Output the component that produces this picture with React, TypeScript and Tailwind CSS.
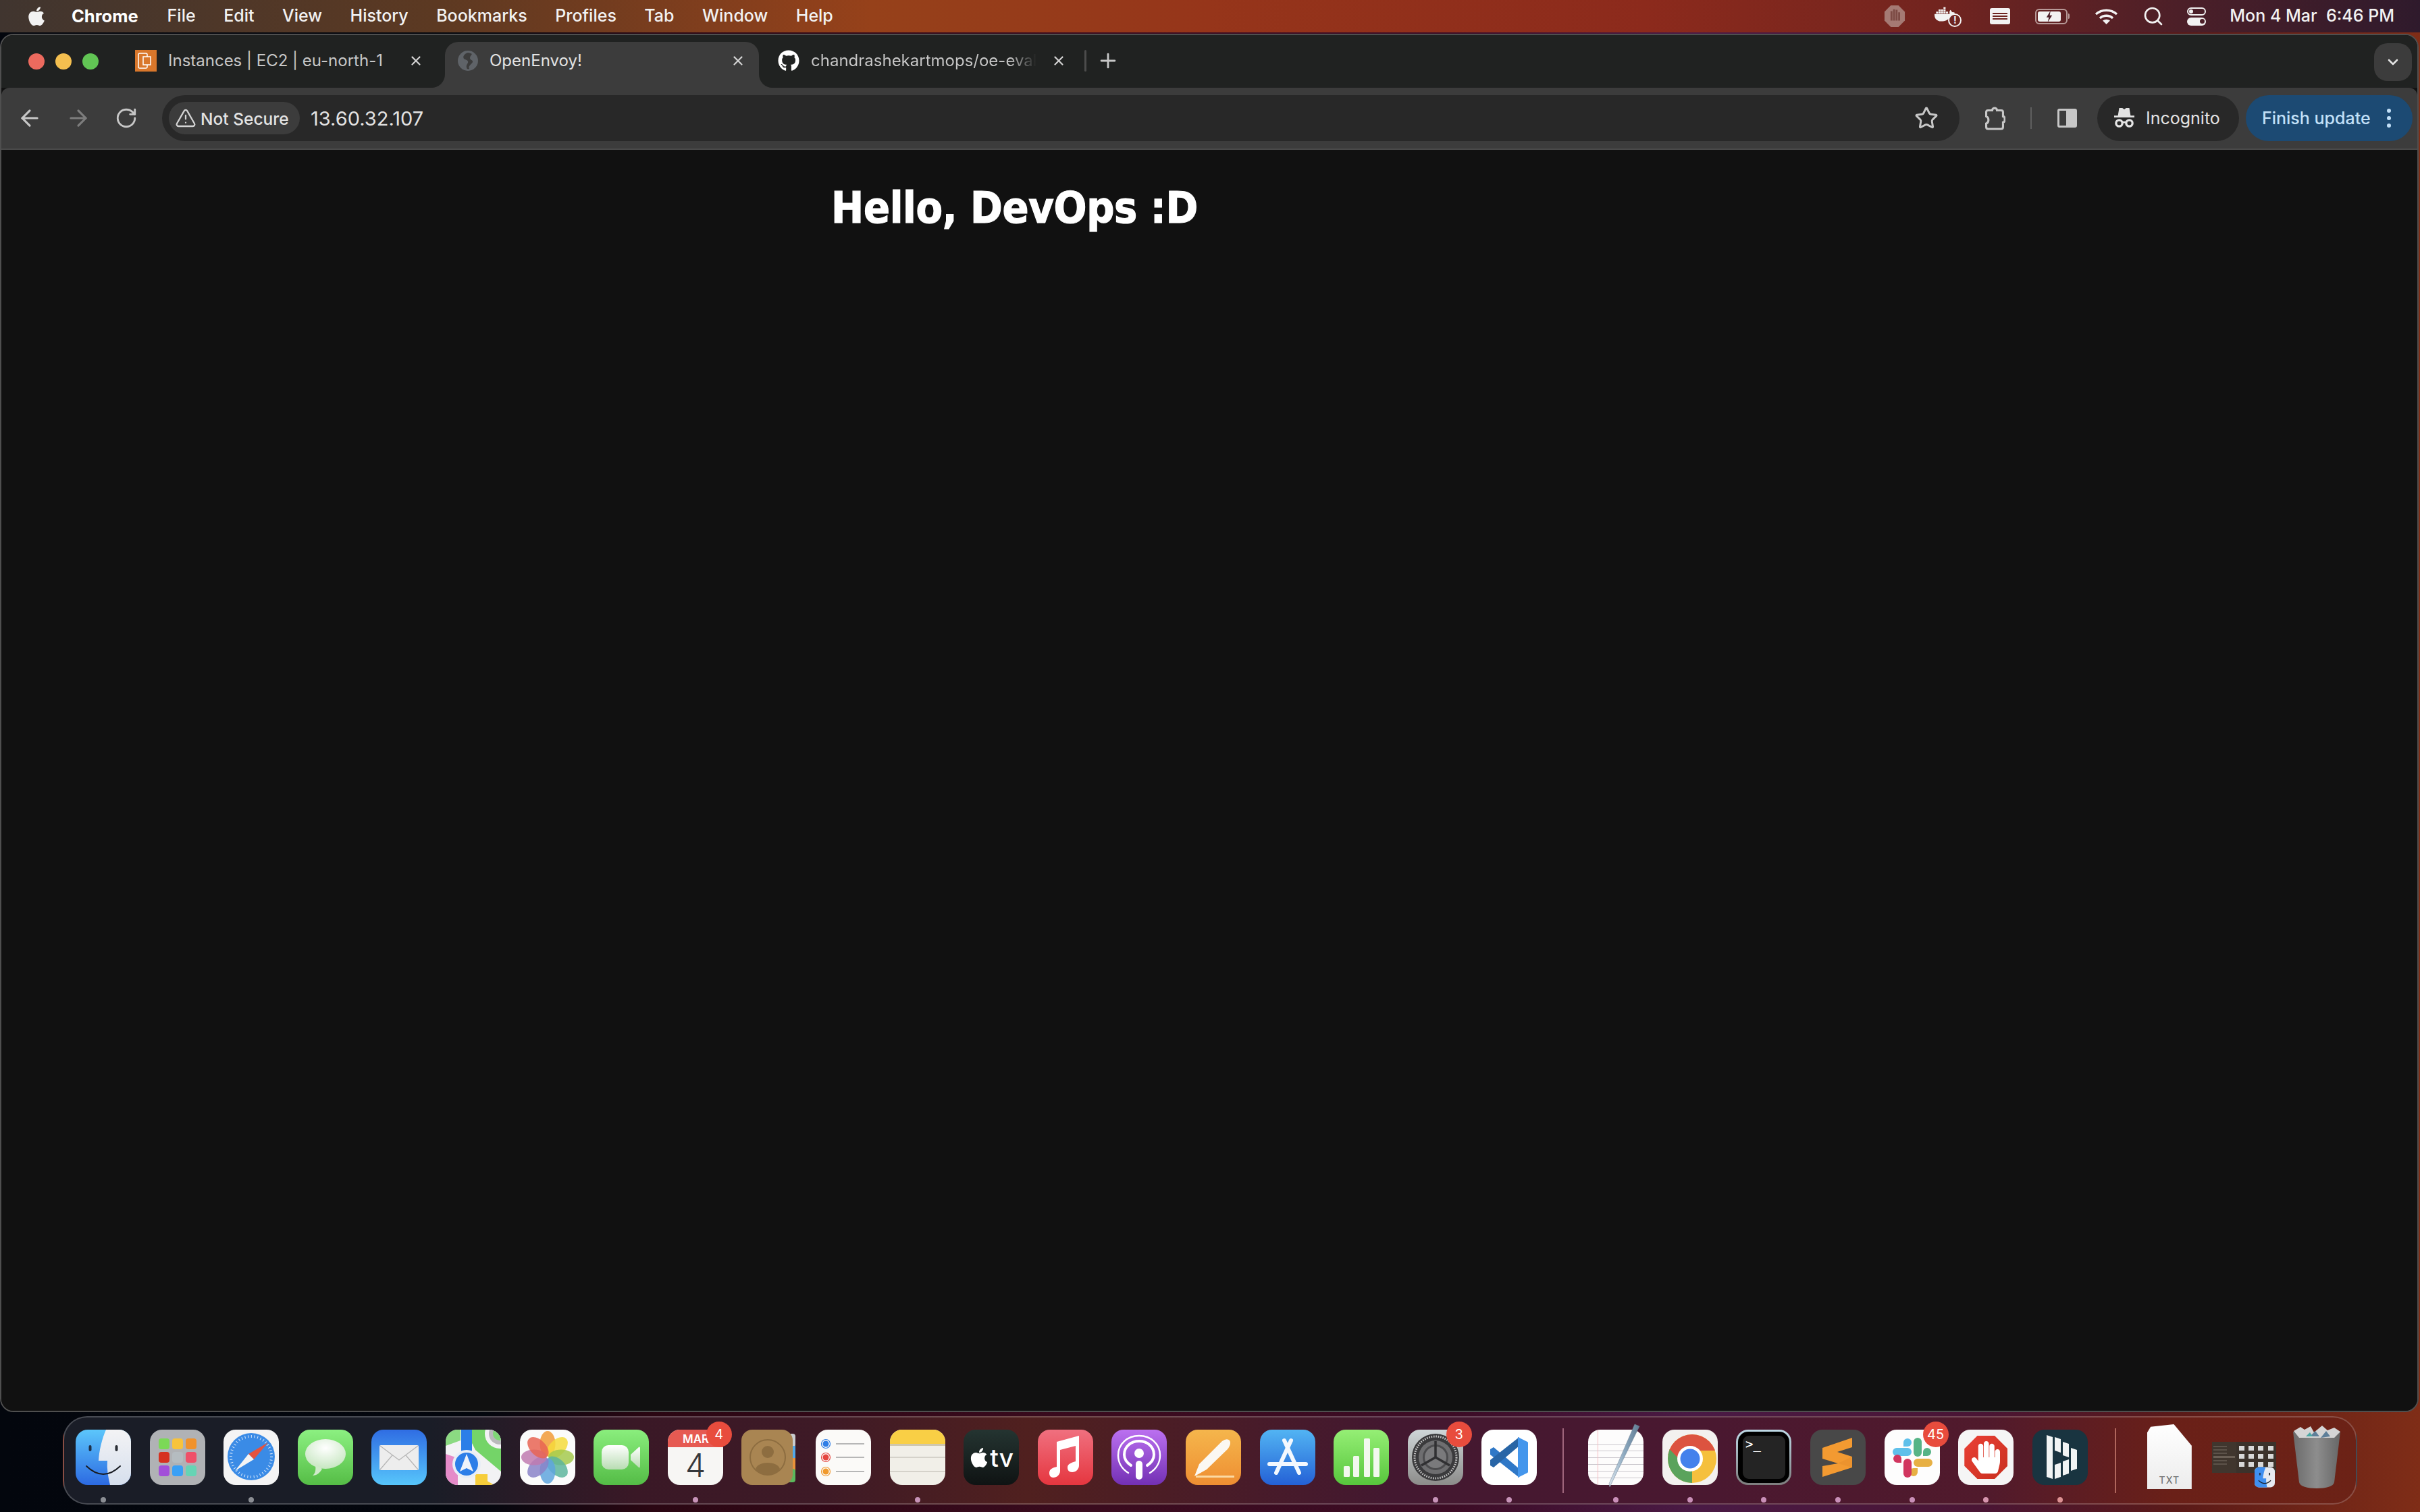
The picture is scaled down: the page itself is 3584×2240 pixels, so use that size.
import type { ReactNode } from "react";
import { ArrowLeft, ArrowRight, ChevronDown, Plus, RotateCw, Search, Star, TriangleAlert, X } from "lucide-react";
import { FaApple, FaDocker, FaGithub, FaHandPaper } from "react-icons/fa";

const menus = ["File", "Edit", "View", "History", "Bookmarks", "Profiles", "Tab", "Window", "Help"];

function Svg({ children }: { children: ReactNode }) {
  return (
    <svg viewBox="0 0 82 82" className="h-[82px] w-[82px] overflow-visible">
      {children}
    </svg>
  );
}

function Finder() {
  return (
    <Svg>
      <defs>
        <linearGradient id="fb" x1="0" y1="0" x2="0" y2="1">
          <stop offset="0" stopColor="#5cc6fb" />
          <stop offset="1" stopColor="#2c6ae2" />
        </linearGradient>
        <linearGradient id="fw" x1="0" y1="0" x2="0" y2="1">
          <stop offset="0" stopColor="#f3f3f5" />
          <stop offset="1" stopColor="#d6dfed" />
        </linearGradient>
        <clipPath id="fc">
          <rect width="82" height="82" rx="18" />
        </clipPath>
      </defs>
      <g clipPath="url(#fc)">
        <rect width="82" height="82" fill="url(#fb)" />
        <path d="M45 0C39 14 35 30 34 46H47C46 58 48 70 51 82H82V0Z" fill="url(#fw)" />
      </g>
      <rect x="19.5" y="23" width="4" height="9" rx="2" fill="#1f3047" />
      <rect x="58.5" y="23" width="4" height="9" rx="2" fill="#2b2f36" />
      <path d="M16 54Q41 78 66 54" fill="none" stroke="#1a1d24" strokeWidth="2" strokeLinecap="round" />
    </Svg>
  );
}

function Launchpad() {
  const cols = ["#7bd957", "#f8c33c", "#f0922c", "#d6311f", "#b5bcc0", "#ef5068", "#a24fd9", "#3aa0f5", "#66d4b4"];
  return (
    <Svg>
      <rect width="82" height="82" rx="18" fill="#b0b2b5" />
      {cols.map((c, i) => (
        <rect key={c} x={13 + (i % 3) * 20} y={13 + Math.floor(i / 3) * 20} width="16" height="16" rx="4" fill={c} />
      ))}
    </Svg>
  );
}

function Safari() {
  return (
    <Svg>
      <rect width="82" height="82" rx="18" fill="#f4f4f4" />
      <circle cx="41" cy="40" r="35" fill="#3a8be6" />
      <circle cx="41" cy="40" r="30" fill="none" stroke="#d8e8fa" strokeWidth="4" strokeDasharray="1 3.7" />
      <polygon points="66,19 45,44 37,36" fill="#e5533f" />
      <polygon points="17,61 45,44 37,36" fill="#f4f4f4" />
    </Svg>
  );
}

function Messages() {
  return (
    <Svg>
      <defs>
        <linearGradient id="mg" x1="0" y1="0" x2="0" y2="1">
          <stop offset="0" stopColor="#8cf081" />
          <stop offset="1" stopColor="#55bd46" />
        </linearGradient>
        <radialGradient id="mb" cx="0.5" cy="0.3" r="0.8">
          <stop offset="0" stopColor="#ffffff" />
          <stop offset="1" stopColor="#bfe3b8" />
        </radialGradient>
      </defs>
      <rect width="82" height="82" rx="18" fill="url(#mg)" />
      <ellipse cx="41" cy="36" rx="30" ry="22" fill="url(#mb)" />
      <path d="M26 52C27 60 26 65 22 68C28 68 33 64 36 58Z" fill="#cfeac9" />
    </Svg>
  );
}

function Mail() {
  return (
    <Svg>
      <defs>
        <linearGradient id="ml" x1="0" y1="0" x2="0" y2="1">
          <stop offset="0" stopColor="#2f6de3" />
          <stop offset="1" stopColor="#57c6fb" />
        </linearGradient>
      </defs>
      <rect width="82" height="82" rx="18" fill="url(#ml)" />
      <rect x="12" y="23" width="58" height="37" rx="2" fill="#ededed" />
      <path d="M13 24L41 45L69 24M13 59L31 38M69 59L51 38" fill="none" stroke="#b4b4b4" strokeWidth="1.2" />
    </Svg>
  );
}

function Maps() {
  return (
    <Svg>
      <defs>
        <clipPath id="mc">
          <rect width="82" height="82" rx="18" />
        </clipPath>
      </defs>
      <g clipPath="url(#mc)">
        <rect width="82" height="82" fill="#f2f2f4" />
        <path d="M0 0H22V16L0 24Z" fill="#7fd776" opacity="0.9" />
        <polygon points="44,0 82,0 82,62 44,30 39,20 39,0" fill="#74d468" />
        <circle cx="80" cy="6" r="22" fill="#f2f2f4" />
        <circle cx="80" cy="6" r="16" fill="#b9b9bb" />
        <circle cx="80" cy="6" r="10" fill="#7fd776" />
        <rect x="23" y="0" width="16" height="40" fill="#2c7ee8" />
        <polygon points="0,36 18,42 18,82 0,82" fill="#e58bc9" />
        <polygon points="44,66 72,82 44,82" fill="#f6cd3b" />
        <rect x="44" y="66" width="18" height="16" fill="#f6cd3b" />
        <circle cx="31" cy="51" r="21" fill="#e8eef6" />
        <circle cx="31" cy="51" r="17" fill="#2c7ee8" />
        <polygon points="31,36 41,62 31,57 21,62" fill="#eef3fa" />
      </g>
    </Svg>
  );
}

function Photos() {
  const cols = ["#f19a37", "#f5db3c", "#a5c94e", "#5db59c", "#5fa5dd", "#8a82c8", "#c07ab0", "#e86453"];
  return (
    <Svg>
      <rect width="82" height="82" rx="18" fill="#fbfbfb" />
      {cols.map((c, i) => (
        <ellipse key={c} cx="41" cy="21" rx="11.5" ry="19" fill={c} opacity="0.85" transform={`rotate(${i * 45} 41 41)`} />
      ))}
      <circle cx="41" cy="41" r="1.5" fill="#fff" />
    </Svg>
  );
}

function FaceTime() {
  return (
    <Svg>
      <defs>
        <linearGradient id="ft" x1="0" y1="0" x2="0" y2="1">
          <stop offset="0" stopColor="#8aee7d" />
          <stop offset="1" stopColor="#54bc46" />
        </linearGradient>
        <linearGradient id="fv" x1="0" y1="0" x2="0" y2="1">
          <stop offset="0" stopColor="#ffffff" />
          <stop offset="1" stopColor="#b8dcb2" />
        </linearGradient>
      </defs>
      <rect width="82" height="82" rx="18" fill="url(#ft)" />
      <rect x="12" y="23" width="40" height="36" rx="10" fill="url(#fv)" />
      <path d="M55 37L67 26C68 25 69 26 69 28V54C69 56 68 57 67 56L55 45Z" fill="url(#fv)" />
    </Svg>
  );
}

function Calendar() {
  return (
    <Svg>
      <defs>
        <clipPath id="cc">
          <rect width="82" height="82" rx="18" />
        </clipPath>
      </defs>
      <g clipPath="url(#cc)">
        <rect width="82" height="82" fill="#f7f6f4" />
        <rect width="82" height="26" fill="#e65a52" />
      </g>
      <text x="22" y="20" fontSize="17" fontWeight="600" fill="#fff" fontFamily="Inter, sans-serif">MAR</text>
      <text x="41" y="70" fontSize="48" fontWeight="300" textAnchor="middle" fill="#36383c" fontFamily="Inter, sans-serif">4</text>
    </Svg>
  );
}

function Contacts() {
  return (
    <Svg>
      <rect x="60" y="6" width="20" height="20" rx="4" fill="#c9cdd0" />
      <rect x="60" y="24" width="20" height="20" fill="#52a8e8" />
      <rect x="60" y="42" width="20" height="20" fill="#e8923a" />
      <rect x="60" y="58" width="20" height="20" rx="4" fill="#5cb85c" />
      <rect width="76" height="82" rx="16" fill="#a98552" />
      <circle cx="39" cy="41" r="26" fill="none" stroke="#8d6d40" strokeWidth="2" />
      <circle cx="39" cy="33" r="9" fill="#8d6d40" />
      <path d="M21 58C25 46 53 46 57 58C50 70 28 70 21 58Z" fill="#8d6d40" />
    </Svg>
  );
}

function Reminders() {
  const rows: [number, string][] = [[21, "#2f7ee6"], [41, "#e5453f"], [62, "#f09a2e"]];
  return (
    <Svg>
      <rect width="82" height="82" rx="18" fill="#fbfaf8" />
      {rows.map(([y, c]) => (
        <g key={y}>
          <circle cx="15" cy={y} r="6.5" fill="none" stroke={c} strokeWidth="1.2" />
          <circle cx="15" cy={y} r="4.5" fill={c} />
          <rect x="30" y={y - 1} width="42" height="2" fill="#b7b7b7" />
        </g>
      ))}
    </Svg>
  );
}

function Notes() {
  return (
    <Svg>
      <defs>
        <clipPath id="nc">
          <rect width="82" height="82" rx="18" />
        </clipPath>
      </defs>
      <g clipPath="url(#nc)">
        <rect width="82" height="82" fill="#f1efe8" />
        <rect width="82" height="21" fill="#f9cf45" />
        <rect y="21" width="82" height="3" fill="#cfc7ae" />
        <rect y="40" width="82" height="2" fill="#d5d2ca" />
        <rect y="61" width="82" height="2" fill="#d5d2ca" />
      </g>
    </Svg>
  );
}

function AppleTv() {
  return (
    <div className="flex h-[82px] w-[82px] items-center justify-center gap-[1px] rounded-[18px] bg-[linear-gradient(180deg,#243431,#0f1313)] text-white">
      <FaApple className="h-[33px] w-[30px]" />
      <span className="text-[37px] leading-none font-medium">tv</span>
    </div>
  );
}

function MusicIcon() {
  return (
    <Svg>
      <defs>
        <linearGradient id="mu" x1="0" y1="0" x2="0" y2="1">
          <stop offset="0" stopColor="#f0707f" />
          <stop offset="1" stopColor="#e5363f" />
        </linearGradient>
      </defs>
      <rect width="82" height="82" rx="18" fill="url(#mu)" />
      <path d="M26 23L59 14V58C59 64 54 68 49 68C44 68 42 65 42 61C42 56 47 54 54 52V29L31 35V66C31 72 26 76 21 76C16 76 15 72 15 69C15 63 21 61 26 60Z" fill="#fff" transform="translate(2 -5)" />
    </Svg>
  );
}

function Podcasts() {
  return (
    <Svg>
      <defs>
        <linearGradient id="po" x1="0" y1="0" x2="0" y2="1">
          <stop offset="0" stopColor="#bb70f0" />
          <stop offset="1" stopColor="#7330b4" />
        </linearGradient>
      </defs>
      <rect width="82" height="82" rx="18" fill="url(#po)" />
      <g fill="none" stroke="#fff" strokeWidth="2.5" strokeLinecap="round">
        <path d="M25 64C15 58 10 48 10 38C10 21 24 9 41 9C58 9 72 21 72 38C72 48 67 58 57 64" />
        <path d="M29 53C23 49 19 43 19 37C19 25 29 17 41 17C53 17 63 25 63 37C63 43 59 49 53 53" strokeWidth="4" />
      </g>
      <circle cx="41" cy="35" r="7" fill="#fff" />
      <rect x="36" y="46" width="10" height="28" rx="5" fill="#fff" />
    </Svg>
  );
}

function Pages() {
  return (
    <Svg>
      <defs>
        <linearGradient id="pg" x1="0" y1="0" x2="0" y2="1">
          <stop offset="0" stopColor="#f5b64c" />
          <stop offset="1" stopColor="#ee8e32" />
        </linearGradient>
      </defs>
      <rect width="82" height="82" rx="18" fill="url(#pg)" />
      <path d="M13 69L20 51L54 17Q61 12 65 16Q68 21 62 29L31 59Z" fill="#fbf8f2" />
      <rect x="15" y="68" width="57" height="3" fill="#fbd9a2" />
    </Svg>
  );
}

function AppStore() {
  return (
    <Svg>
      <defs>
        <linearGradient id="as" x1="0" y1="0" x2="0" y2="1">
          <stop offset="0" stopColor="#52b4f3" />
          <stop offset="1" stopColor="#2461d6" />
        </linearGradient>
      </defs>
      <rect width="82" height="82" rx="18" fill="url(#as)" />
      <g stroke="#f3f8fe" strokeLinecap="round">
        <line x1="36" y1="16" x2="58" y2="64" strokeWidth="6" />
        <line x1="46" y1="16" x2="24" y2="64" strokeWidth="6" />
        <line x1="14" y1="51" x2="68" y2="51" strokeWidth="6" />
      </g>
    </Svg>
  );
}

function Numbers() {
  const bars: [number, number][] = [[15, 16], [29, 31], [45, 57], [59, 43]];
  return (
    <Svg>
      <defs>
        <linearGradient id="nu" x1="0" y1="0" x2="0" y2="1">
          <stop offset="0" stopColor="#95ef75" />
          <stop offset="1" stopColor="#57c63c" />
        </linearGradient>
      </defs>
      <rect width="82" height="82" rx="18" fill="url(#nu)" />
      {bars.map(([x, h]) => (
        <rect key={x} x={x} y={70 - h} width="9" height={h} rx="1.5" fill="#f2f8ee" />
      ))}
    </Svg>
  );
}

function Settings() {
  return (
    <Svg>
      <defs>
        <linearGradient id="se" x1="0" y1="0" x2="0" y2="1">
          <stop offset="0" stopColor="#cfd6d8" />
          <stop offset="1" stopColor="#8c8c8a" />
        </linearGradient>
      </defs>
      <rect width="82" height="82" rx="18" fill="url(#se)" />
      <circle cx="41" cy="41" r="35" fill="#3a3a3c" />
      <circle cx="41" cy="41" r="31" fill="none" stroke="#c4c4c4" strokeWidth="3" strokeDasharray="1.6 1.8" />
      <circle cx="41" cy="41" r="25" fill="#6e6e70" />
      <circle cx="41" cy="41" r="19" fill="#4c4c4e" />
      <circle cx="41" cy="41" r="16" fill="#7a7a7c" />
      <g stroke="#303032" strokeWidth="3.5">
        <line x1="41" y1="41" x2="41" y2="17" />
        <line x1="41" y1="41" x2="62" y2="53" />
        <line x1="41" y1="41" x2="20" y2="53" />
      </g>
    </Svg>
  );
}

function VsCode() {
  return (
    <Svg>
      <rect width="82" height="82" rx="18" fill="#fff" />
      <polygon points="13,29 18,26 56,58 56,71 13,37" fill="#2f78c7" />
      <polygon points="13,53 18,56 56,24 56,11 13,45" fill="#2865a6" />
      <path d="M54 11L68 18C69 18.500 69 19 69 20V62C69 63 69 63.500 68 64L54 71Z" fill="#4496ec" />
    </Svg>
  );
}

function TextEdit() {
  return (
    <Svg>
      <defs>
        <clipPath id="tc">
          <rect width="82" height="82" rx="18" />
        </clipPath>
        <linearGradient id="pen" x1="0" y1="0" x2="1" y2="0">
          <stop offset="0" stopColor="#dce6ee" />
          <stop offset="0.5" stopColor="#8da9c0" />
          <stop offset="1" stopColor="#5f7a92" />
        </linearGradient>
      </defs>
      <g clipPath="url(#tc)">
        <rect width="82" height="82" fill="#fdfcfc" />
        {[22, 31, 41, 51, 61, 71].map((y) => (
          <rect key={y} y={y} width="82" height="1" fill="#c9c6cc" />
        ))}
        <rect x="14" width="1" height="82" fill="#f4bcc0" />
      </g>
      <polygon points="32,85 31,80 69,-8 76,-5" fill="url(#pen)" stroke="#6f8297" strokeWidth="0.5" />
    </Svg>
  );
}

function ChromeLogo() {
  return (
    <Svg>
      <defs>
        <clipPath id="cr">
          <circle cx="44" cy="43" r="36" />
        </clipPath>
      </defs>
      <rect width="82" height="82" rx="18" fill="#f3f1ef" />
      <g clipPath="url(#cr)">
        <rect width="82" height="82" fill="#f5c03d" />
        <polygon points="0,0 82,0 82,31 44,31 26,52 0,30" fill="#dc5340" />
        <polygon points="0,18 26,45 44,48 44,82 0,82" fill="#5aa35c" />
      </g>
      <circle cx="41" cy="43" r="19" fill="#fff" />
      <circle cx="41" cy="43" r="14.500" fill="#4481ec" />
    </Svg>
  );
}

function Terminal() {
  return (
    <Svg>
      <defs>
        <linearGradient id="te" x1="0" y1="0" x2="0" y2="1">
          <stop offset="0" stopColor="#bfdbe8" />
          <stop offset="1" stopColor="#7e7e7e" />
        </linearGradient>
      </defs>
      <rect width="82" height="82" rx="18" fill="url(#te)" />
      <rect x="3" y="3" width="76" height="76" rx="15" fill="#000" />
      <rect x="10" y="9" width="63" height="64" rx="9" fill="#242424" />
      <text x="14" y="28" fontSize="19" fill="#fff" fontFamily="'DejaVu Sans Mono', monospace">{">_"}</text>
    </Svg>
  );
}

function Sublime() {
  return (
    <Svg>
      <rect width="82" height="82" rx="18" fill="#484848" />
      <polygon points="62,12 18,27 18,43 41,50 18,54 18,70 62,56 62,40 40,33 62,26" fill="#f39a31" />
      <polygon points="18,43 41,50 62,40 62,56" fill="#e58c2b" opacity="0.5" />
    </Svg>
  );
}

function Slack() {
  return (
    <Svg>
      <rect width="82" height="82" rx="18" fill="#fdfdfd" />
      <g fill="#5fc0ea">
        <rect x="12" y="27" width="28" height="12" rx="6" />
        <path d="M28 25V19A6 6 0 1 1 34 25Z" transform="translate(0 0)" />
      </g>
      <g fill="#56b486">
        <rect x="43" y="12" width="12" height="28" rx="6" />
        <path d="M57 39H63A6 6 0 1 0 57 33Z" />
      </g>
      <g fill="#e7b044">
        <rect x="43" y="43" width="28" height="12" rx="6" />
        <path d="M43 57H49V63A6 6 0 1 1 43 57Z" />
      </g>
      <g fill="#d1365f">
        <rect x="28" y="43" width="12" height="28" rx="6" />
        <path d="M25 43V49H19A6 6 0 1 1 25 43Z" />
      </g>
    </Svg>
  );
}

function AdBlock() {
  return (
    <div className="flex h-[82px] w-[82px] items-center justify-center rounded-[18px] bg-[#f5f5f5]">
      <div className="flex h-[64px] w-[64px] items-center justify-center bg-[linear-gradient(135deg,#ea4036,#c9301f)] [clip-path:polygon(30%_0,70%_0,100%_30%,100%_70%,70%_100%,30%_100%,0_70%,0_30%)]">
        <FaHandPaper className="h-[48px] w-[42px] text-white" />
      </div>
    </div>
  );
}

function Dashlane() {
  const bars = [
    "21,8 30,11 30,73 21,70",
    "33,11 42,14 42,34 33,31",
    "33,52 42,49 42,70 33,73",
    "45,18 54,21 54,41 45,38",
    "45,47 54,44 54,65 45,68",
    "57,27 66,30 66,58 57,61",
  ];
  return (
    <Svg>
      <rect width="82" height="82" rx="18" fill="#193440" />
      {bars.map((b) => (
        <polygon key={b} points={b} fill="#f1f4f4" />
      ))}
    </Svg>
  );
}

function TxtFile() {
  return (
    <div className="flex h-[96px] w-[66px] items-end justify-center overflow-hidden bg-[linear-gradient(180deg,#ffffff,#ececec)] pb-[6px] [clip-path:polygon(8%_4%,60%_0,100%_33%,100%_100%,0_100%,0_13%)]">
      <span className="text-[14px] leading-none font-medium tracking-[1px] text-[#777]">TXT</span>
    </div>
  );
}

function FolderStack() {
  return (
    <div className="relative mb-[24px] grid h-[46px] w-[95px] grid-cols-[36px_1fr] bg-[#3b322b]">
      <div className="flex flex-col gap-[3px] bg-[#40362e] pt-[6px] pl-[2px]">
        {[0, 1, 2, 3, 4, 5].map((i) => (
          <div key={i} className={i === 3 ? "h-[3px] w-[32px] bg-[#6a5f55]" : "h-[2px] w-[20px] bg-[#5d534a]"} />
        ))}
      </div>
      <div className="grid grid-cols-4 content-start gap-x-[6px] gap-y-[5px] px-[4px] pt-[6px]">
        {[0, 1, 2, 3, 4, 5, 6, 7, 8, 9, 10, 11].map((i) => (
          <div key={i} className="mx-auto h-[7px] w-[8px] bg-[#d8d8d8]" />
        ))}
      </div>
      <div className="absolute top-[37px] right-[2px] h-[31px] w-[30px] [&_svg]:h-[31px] [&_svg]:w-[30px]">
        <MiniFinder />
      </div>
    </div>
  );
}

function MiniFinder() {
  return (
    <svg viewBox="0 0 82 82">
      <rect width="82" height="82" rx="18" fill="#e6eaf1" />
      <path d="M18 0H45C39 14 35 30 34 46H47C46 58 48 70 51 82H18A18 18 0 0 1 0 64V18A18 18 0 0 1 18 0Z" fill="#3f8ff0" />
      <rect x="19" y="23" width="5" height="10" fill="#1f3047" />
      <rect x="58" y="23" width="5" height="10" fill="#2b2f36" />
      <path d="M16 54Q41 78 66 54" fill="none" stroke="#1a1d24" strokeWidth="3" />
    </svg>
  );
}

function Trash() {
  return (
    <svg viewBox="0 0 72 96" className="h-[96px] w-[72px]">
      <defs>
        <linearGradient id="tr" x1="0" y1="0" x2="1" y2="0">
          <stop offset="0" stopColor="#6b6b6b" />
          <stop offset="0.5" stopColor="#8d8d8d" />
          <stop offset="1" stopColor="#666" />
        </linearGradient>
      </defs>
      <path d="M1 11H71L62 86C61 92 50 95 36 95C22 95 11 92 10 86Z" fill="url(#tr)" />
      <path d="M2 10L12 4L18 8L27 3L32 12L44 2L52 9L62 5L71 11L62 20H10Z" fill="#d5d5d5" />
      <path d="M26 18L34 10L40 18ZM42 20L50 10L56 18Z" fill="#5e7f99" />
      <path d="M20 18L26 12L30 18Z" fill="#4aa7a3" />
    </svg>
  );
}

type DockItem = { icon: ReactNode; dot?: string; badge?: string };

const leftDock: DockItem[] = [
  { icon: <Finder />, dot: "bg-[#8b8e94]" },
  { icon: <Launchpad /> },
  { icon: <Safari />, dot: "bg-[#8b8e94]" },
  { icon: <Messages /> },
  { icon: <Mail /> },
  { icon: <Maps /> },
  { icon: <Photos /> },
  { icon: <FaceTime /> },
  { icon: <Calendar />, dot: "bg-[#c793b8]", badge: "4" },
  { icon: <Contacts /> },
  { icon: <Reminders /> },
  { icon: <Notes />, dot: "bg-[#c793b8]" },
  { icon: <AppleTv /> },
  { icon: <MusicIcon /> },
  { icon: <Podcasts /> },
  { icon: <Pages /> },
  { icon: <AppStore /> },
  { icon: <Numbers /> },
  { icon: <Settings />, dot: "bg-[#c793b8]", badge: "3" },
  { icon: <VsCode />, dot: "bg-[#c793b8]" },
];

const midDock: DockItem[] = [
  { icon: <TextEdit />, dot: "bg-[#c98fb8]" },
  { icon: <ChromeLogo />, dot: "bg-[#c98fb8]" },
  { icon: <Terminal />, dot: "bg-[#c98fb8]" },
  { icon: <Sublime />, dot: "bg-[#c98fb8]" },
  { icon: <Slack />, dot: "bg-[#c98fb8]", badge: "45" },
  { icon: <AdBlock />, dot: "bg-[#d594ad]" },
  { icon: <Dashlane />, dot: "bg-[#dd9193]" },
];

function DockApp({ item }: { item: DockItem }) {
  return (
    <div className="relative flex w-[82px] flex-col items-center">
      {item.icon}
      {item.badge && (
        <span className="absolute top-[-12px] right-[-13px] flex h-[38px] w-[38px] items-center justify-center rounded-full bg-[#e84c3d] text-[20px] leading-none text-white">
          {item.badge}
        </span>
      )}
      {item.dot && <span className={`mt-[18px] h-[8px] w-[8px] rounded-full ${item.dot}`} />}
    </div>
  );
}

function Dock() {
  return (
    <div className="mt-[6px] ml-[93px] flex h-[131px] w-[3398px] items-start rounded-[36px] border-2 border-[#ffffff33] bg-[linear-gradient(90deg,#1a1d27_0%,#1a1d27_16%,#3a1826_25%,#3e1a26_33%,#50201f_42%,#431830_58%,#4a1830_72%,#511a2c_84%,#6a2018_92%,#6c2216_100%)] pt-[18px] pl-[17px]">
      <div className="flex gap-[27.6px]">
        {leftDock.map((item, i) => (
          <DockApp key={i} item={item} />
        ))}
      </div>
      <div className="mt-[-2px] mr-[36px] ml-[38px] h-[96px] w-[2px] bg-[#a0667c]" />
      <div className="flex gap-[27.6px]">
        {midDock.map((item, i) => (
          <DockApp key={i} item={item} />
        ))}
      </div>
      <div className="mt-[-2px] mr-[46px] ml-[40px] h-[96px] w-[2px] bg-[#b0665c]" />
      <div className="mt-[-8px] flex h-[96px] items-end">
        <TxtFile />
        <div className="ml-[30px]">
          <FolderStack />
        </div>
        <div className="ml-[24px]">
          <Trash />
        </div>
      </div>
    </div>
  );
}

function TabClose() {
  return <X className="h-[22px] w-[22px] shrink-0 text-[#d4d4d4]" strokeWidth={2.4} />;
}

function Tabs() {
  return (
    <div className="flex h-[78px] items-end bg-[#202221]">
      <div className="flex h-[78px] w-[198px] shrink-0 items-center gap-[16px] pl-[40px]">
        <span className="h-[24px] w-[24px] rounded-full bg-[#ec6a5e]" />
        <span className="h-[24px] w-[24px] rounded-full bg-[#f4bf4f]" />
        <span className="h-[24px] w-[24px] rounded-full bg-[#61c554]" />
      </div>
      <div className="flex h-[68px] w-[459px] shrink-0 items-center pb-[12px]">
        <svg viewBox="0 0 32 32" className="h-[32px] w-[32px] shrink-0">
          <rect width="32" height="32" fill="#d9772b" />
          <rect x="5" y="5" width="13" height="22" rx="2" fill="none" stroke="#fff" strokeWidth="1.5" />
          <rect x="12" y="10" width="11" height="12" fill="#d9772b" stroke="#fff" strokeWidth="1.5" />
        </svg>
        <span className="ml-[17px] w-[340px] text-[24px] whitespace-nowrap text-[#c7c7c7]">Instances | EC2 | eu-north-1</span>
        <span className="ml-[16px]">
          <TabClose />
        </span>
      </div>
      <div className="relative flex h-[68px] w-[465px] shrink-0 items-center rounded-t-[20px] bg-[#3c3c3c] pr-[20px] pb-[12px] pl-[19px]">
        <div className="absolute bottom-0 left-[-20px] h-[20px] w-[20px] bg-[#3c3c3c]">
          <div className="h-full w-full rounded-br-[20px] bg-[#202221]" />
        </div>
        <div className="absolute right-[-20px] bottom-0 h-[20px] w-[20px] bg-[#3c3c3c]">
          <div className="h-full w-full rounded-bl-[20px] bg-[#202221]" />
        </div>
        <svg viewBox="0 0 30 30" className="h-[30px] w-[30px] shrink-0">
          <circle cx="15" cy="15" r="15" fill="#5f6368" />
          <path d="M15 3C9 5 7 9 9 12C11 14 14 13 15 16C16 19 12 20 13 25C13 27 15 28 17 27C15 22 20 21 22 17C23 14 18 14 18 11C18 8 20 7 21 5C19 4 17 3 15 3Z" fill="#3c3c3c" />
        </svg>
        <span className="ml-[17px] flex-1 text-[24px] text-[#e3e3e3]">OpenEnvoy!</span>
        <TabClose />
      </div>
      <div className="flex h-[68px] w-[482px] shrink-0 items-center pb-[12px] pl-[28px]">
        <FaGithub className="h-[32px] w-[32px] shrink-0 text-white" />
        <span className="ml-[17px] w-[334px] bg-[linear-gradient(90deg,#c7c7c7_88%,transparent_100%)] bg-clip-text text-[24px] whitespace-nowrap text-transparent">
          chandrashekartmops/oe-evalu
        </span>
        <span className="ml-[22px]">
          <TabClose />
        </span>
      </div>
      <div className="mb-[24px] h-[32px] w-[3px] shrink-0 rounded-full bg-[#4c4c4c]" />
      <Plus className="mb-[23px] ml-[15px] h-[34px] w-[34px] shrink-0 text-[#c7c7c7]" strokeWidth={2} />
      <div className="flex-1" />
      <div className="mr-[8px] mb-[10px] flex h-[56px] w-[56px] items-center justify-center rounded-[20px] bg-[#3c3c3c]">
        <ChevronDown className="h-[24px] w-[24px] text-[#e3e3e3]" strokeWidth={2.6} />
      </div>
    </div>
  );
}

function Toolbar() {
  return (
    <div className="flex h-[92px] items-center rounded-t-[12px] border-b-2 border-[#4a4a4a] bg-[#3c3c3c]">
      <div className="flex w-[238px] shrink-0 items-center pl-[23px]">
        <ArrowLeft className="h-[38px] w-[38px] text-[#c7c7c7]" strokeWidth={2} />
        <ArrowRight className="ml-[34px] h-[38px] w-[38px] text-[#7d7d7d]" strokeWidth={2} />
        <RotateCw className="ml-[35px] h-[34px] w-[34px] text-[#c7c7c7]" strokeWidth={2} />
      </div>
      <div className="flex h-[68px] w-[2662px] shrink-0 items-center rounded-full bg-[#282828] pr-[31px] pl-[10px]">
        <div className="flex h-[48px] w-[194px] items-center rounded-full bg-[#3c3c3c] pl-[9px]">
          <TriangleAlert className="h-[32px] w-[32px] text-[#d4d4d4]" strokeWidth={1.7} />
          <span className="ml-[6px] pt-[2px] text-[24.500px] font-medium text-[#e3e3e3]">Not Secure</span>
        </div>
        <span className="ml-[16px] flex-1 pt-[2px] text-[29px] text-[#e3e3e3]">13.60.32.107</span>
        <Star className="h-[36px] w-[36px] text-[#c7c7c7]" strokeWidth={2} />
      </div>
      <svg viewBox="0 0 36 40" className="ml-[36px] h-[36px] w-[32px] shrink-0" fill="none" stroke="#c7c7c7" strokeWidth="3.500">
        <path d="M7 7H14C14 2 22 2 22 7H29C31 7 32 8 32 10V17C36 17 36 27 32 27V35C32 37 31 38 29 38H7C5 38 4 37 4 35V29C9 27 9 19 4 17V10C4 8 5 7 7 7Z" />
      </svg>
      <div className="ml-[37px] h-[32px] w-[2px] shrink-0 bg-[#5f5f5f]" />
      <div className="ml-[38px] flex h-[28px] w-[29px] shrink-0 overflow-hidden rounded-[3px] border-[3px] border-[#c7c7c7]">
        <div className="w-[10px] bg-[#3c3c3c]" />
        <div className="flex-1 bg-[#c7c7c7]" />
      </div>
      <div className="ml-[30px] flex h-[68px] w-[210px] shrink-0 items-center rounded-full bg-[#282828] pl-[25px]">
        <svg viewBox="0 0 32 32" className="h-[30px] w-[30px]" fill="#e3e3e3">
          <path d="M8 0H13L16 2L19 0H24L26 12H32V15H0V12H6Z" />
          <circle cx="8" cy="24" r="5" fill="none" stroke="#e3e3e3" strokeWidth="3.500" />
          <circle cx="24" cy="24" r="5" fill="none" stroke="#e3e3e3" strokeWidth="3.500" />
          <rect x="12" y="21" width="8" height="3" />
        </svg>
        <span className="ml-[17px] pt-[2px] text-[25px] text-[#e3e3e3]">Incognito</span>
      </div>
      <div className="ml-[10px] flex h-[68px] w-[247px] shrink-0 items-center rounded-full bg-[#1c4a73] pl-[24px]">
        <span className="pt-[2px] text-[25px] font-medium text-[#c2e0f8]">Finish update</span>
        <div className="ml-[24px] flex flex-col gap-[5px]">
          <span className="h-[6px] w-[6px] rounded-full bg-[#c2e0f8]" />
          <span className="h-[6px] w-[6px] rounded-full bg-[#c2e0f8]" />
          <span className="h-[6px] w-[6px] rounded-full bg-[#c2e0f8]" />
        </div>
      </div>
    </div>
  );
}

function MenuBar() {
  return (
    <div className="flex h-[48px] shrink-0 items-center bg-[linear-gradient(90deg,#40352f_0%,#5c3922_18%,#96411a_36%,#96351a_50%,#8c2a1c_68%,#72241f_80%,#4c1f28_90%,#2f1a2c_100%)] pl-[40px] text-white">
      <FaApple className="h-[32px] w-[28px] text-[#f2f2f2]" />
      <span className="ml-[38px] text-[25.500px] font-bold">Chrome</span>
      <div className="ml-[43px] flex gap-[41.5px] text-[25px] font-medium text-[#f2f2f2]">
        {menus.map((m) => (
          <span key={m}>{m}</span>
        ))}
      </div>
      <div className="flex-1" />
      <div className="flex items-center text-[#f2f2f2]">
        <svg viewBox="0 0 32 34" className="h-[32px] w-[34px]">
          <polygon points="10,0 22,0 32,10 32,24 22,34 10,34 0,24 0,10" fill="#a57a74" />
          <path d="M11 24V9M15 24V6M19 24V7M23 24V11" stroke="#7c4a44" strokeWidth="3" />
        </svg>
        <div className="relative ml-[42px] h-[32px] w-[40px]">
          <FaDocker className="absolute top-0 left-0 h-[26px] w-[30px]" />
          <span className="absolute right-0 bottom-0 flex h-[20px] w-[20px] items-center justify-center rounded-full border-2 border-[#f2f2f2] bg-[#6e2420] text-[14px] leading-none font-bold">!</span>
        </div>
        <div className="ml-[42px] flex h-[24px] w-[30px] flex-col gap-[2px] rounded-[3px] bg-[#f2f2f2] px-[4px] pt-[7px]">
          <span className="h-[2px] w-[22px] bg-[#6e2420]" />
          <span className="h-[2px] w-[22px] bg-[#6e2420]" />
          <span className="h-[2px] w-[22px] bg-[#6e2420]" />
        </div>
        <div className="ml-[37px] flex items-center">
          <div className="flex h-[23px] w-[48px] items-center rounded-[6px] border-2 border-[#b89a98] p-[2px]">
            <div className="flex h-full w-[34px] items-center justify-center rounded-[3px] bg-[#f2f2f2]">
              <svg viewBox="0 0 20 28" className="h-[17px] w-[14px]">
                <polygon points="13,0 3,16 9,16 6,28 17,11 11,11" fill="#4c1f28" />
              </svg>
            </div>
          </div>
          <div className="ml-[1px] h-[8px] w-[2px] rounded-r-full bg-[#b89a98]" />
        </div>
        <svg viewBox="0 0 35 24" className="ml-[37px] h-[24px] w-[35px]" fill="none" stroke="#f2f2f2" strokeWidth="3.500">
          <path d="M2 9A24 24 0 0 1 33 9" />
          <path d="M8 15A14 14 0 0 1 27 15" />
          <path d="M17.500 24L12 18.500Q17.500 15 23 18.500Z" fill="#f2f2f2" stroke="none" />
        </svg>
        <Search className="ml-[36px] h-[32px] w-[32px]" strokeWidth={2} />
        <div className="ml-[34px] flex flex-col gap-[3px]">
          <div className="flex h-[12px] w-[28px] items-center justify-start rounded-full border-2 border-[#f2f2f2] pl-[1px]">
            <span className="h-[6px] w-[6px] rounded-full bg-[#f2f2f2]" />
          </div>
          <div className="flex h-[12px] w-[28px] items-center justify-end rounded-full bg-[#f2f2f2] pr-[2px]">
            <span className="h-[7px] w-[7px] rounded-full bg-[#4c1f28]" />
          </div>
        </div>
        <span className="mr-[38px] ml-[35px] text-[25px] font-medium whitespace-pre">Mon 4 Mar  6:46 PM</span>
      </div>
    </div>
  );
}

export default function App() {
  return (
    <div className="flex h-[2240px] w-[3584px] flex-col overflow-hidden bg-[linear-gradient(90deg,#03060d_0%,#04070e_20%,#2b0713_27%,#3a0b1e_45%,#3c0c25_60%,#4a1a45_70%,#4a1534_82%,#5a1a18_90%,#7f2d17_100%)] font-['Inter','Liberation_Sans',sans-serif]">
      <MenuBar />
      <div className="mt-[2px] mr-[2px] flex h-[2042px] shrink-0 flex-col overflow-hidden rounded-[20px] border-2 border-[#4f4f4f] bg-[#111111]">
        <Tabs />
        <Toolbar />
        <div className="flex-1 bg-[#111111] pt-[48px] pl-[1229px]">
          <h1 className="font-['DejaVu_Sans',sans-serif] text-[64px] leading-[76px] font-bold tracking-[-0.3px] text-white [font-stretch:condensed] [-webkit-text-stroke:1.2px_white]">Hello, DevOps :D</h1>
        </div>
      </div>
      <Dock />
    </div>
  );
}
